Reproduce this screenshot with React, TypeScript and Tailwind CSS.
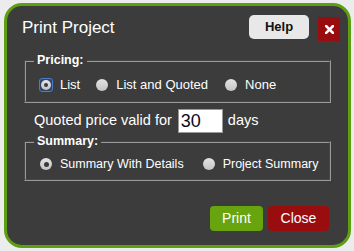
import { useState } from 'react';

const font = { fontFamily: '"Liberation Sans", Arial, sans-serif' };

function Radio({ checked, focused }: { checked: boolean; focused?: boolean }) {
  const dot = (
    <span className="w-[12px] h-[12px] rounded-full bg-gradient-to-b from-[#e4e4e4] to-[#c4c4c4] flex items-center justify-center">
      {checked && <span className="w-[5px] h-[5px] rounded-full bg-[#3a3a3a]" />}
    </span>
  );
  if (focused) {
    return (
      <span className="w-[14px] h-[14px] rounded-[3px] border-[1.5px] border-[#4b7cc6] bg-[#2f4466] flex items-center justify-center">
        <span className="w-[10px] h-[10px] rounded-full bg-gradient-to-b from-[#e4e4e4] to-[#c4c4c4] flex items-center justify-center">
          <span className="w-[4px] h-[4px] rounded-full bg-[#3a3a3a]" />
        </span>
      </span>
    );
  }
  return <span className="w-[14px] h-[14px] flex items-center justify-center">{dot}</span>;
}

function Option({ label, checked, focused, onClick, className, small }: { label: string; checked: boolean; focused?: boolean; onClick: () => void; className?: string; small?: boolean }) {
  return (
    <label className={`flex items-center gap-[7px] cursor-pointer ${className ?? ''}`} onClick={onClick}>
      <Radio checked={checked} focused={focused} />
      <span className={`${small ? 'text-[12.5px]' : 'text-[13px]'} leading-[16px] text-white`}>{label}</span>
    </label>
  );
}

export default function App() {
  const [pricing, setPricing] = useState('list');
  const [summary, setSummary] = useState('details');
  const [days, setDays] = useState('30');

  return (
    <div className="w-[354px] h-[251px] bg-[#ececec] pt-[3px] pl-[4px]" style={font}>
      <div className="w-[347px] h-[245px] border-[3px] border-[#5e9e12] rounded-[18px] bg-[#3c3c3c] flex flex-col">
        <div className="flex items-start pt-[9px] pl-[15px] pr-[8px]">
          <div className="mt-[3px] text-[17px] leading-[20px] text-white">Print Project</div>
          <button className="ml-auto w-[60px] h-[24px] rounded-[5px] bg-[#e8e8e9] text-[13px] font-bold text-[#111]">Help</button>
          <button className="mt-[2px] ml-[9px] w-[22px] h-[24px] bg-[#9a0d0f] flex items-center justify-center">
            <svg width="9" height="9" viewBox="0 0 9 9">
              <path d="M1 1L8 8M8 1L1 8" stroke="white" strokeWidth="2.6" strokeLinecap="square" />
            </svg>
          </button>
        </div>

        <fieldset className="mt-[12px] mx-[17px] border-2 border-[#9a9a9a] [border-style:groove] pl-[8px] pt-[9px] pb-[8px]">
          <legend className="px-[3px] text-[12.5px] leading-[15px] font-bold text-white">Pricing:</legend>
          <div className="flex items-center pl-[5px]">
            <Option label="List" checked={pricing === 'list'} focused={pricing === 'list'} onClick={() => setPricing('list')} />
            <Option className="ml-[15px]" label="List and Quoted" checked={pricing === 'quoted'} onClick={() => setPricing('quoted')} />
            <Option className="ml-[16px]" label="None" checked={pricing === 'none'} onClick={() => setPricing('none')} />
          </div>
        </fieldset>

        <div className="mt-[6px] mx-[17px] pl-[10px] flex items-center h-[24px] text-white text-[14.5px]">
          <span>Quoted price valid for</span>
          <input
            className="ml-[6px] w-[45px] h-[24px] bg-white border border-[#999] pl-[2px] text-[18px] text-[#0a0a1a] outline-none"
            value={days}
            onChange={e => setDays(e.target.value)}
          />
          <span className="ml-[5px]">days</span>
        </div>

        <fieldset className="mt-[1px] mx-[17px] border-2 border-[#9a9a9a] [border-style:groove] pl-[8px] pt-[7px] pb-[7px]">
          <legend className="px-[3px] text-[12.5px] leading-[15px] font-bold text-white">Summary:</legend>
          <div className="flex items-center pl-[5px]">
            <Option small label="Summary With Details" checked={summary === 'details'} onClick={() => setSummary('details')} />
            <Option small className="ml-[18px]" label="Project Summary" checked={summary === 'project'} onClick={() => setSummary('project')} />
          </div>
        </fieldset>

        <div className="mt-[25px] flex justify-end gap-[5px] pr-[19px]">
          <button className="w-[53px] h-[25px] rounded-[4px] bg-[#68a40e] text-white text-[14px]">Print</button>
          <button className="w-[61px] h-[25px] rounded-[4px] bg-[#9a0d0f] text-white text-[14px]">Close</button>
        </div>
      </div>
    </div>
  );
}
